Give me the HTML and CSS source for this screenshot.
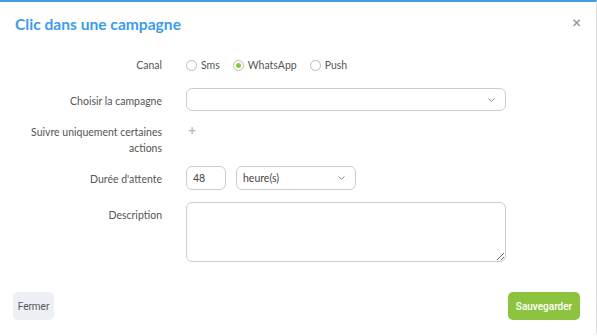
FILE: index.html
```html
<!DOCTYPE html>
<html lang="fr">
<head>
    <meta charset="UTF-8">
    <title>Clic dans une campagne</title>
    <link rel="stylesheet" href="styles.css">
</head>
<body>
    <div class="modal">
        <div class="modal-header">
            <h3>Clic dans une campagne</h3>
            <span class="close">&times;</span>
        </div>
        <form class="modal-body">
            <div class="form-row row-canal">
                <label class="form-label">Canal</label>
                <div class="radios">
                    <label class="radio"><input type="radio" name="canal"> Sms</label>
                    <label class="radio"><input type="radio" name="canal" checked> WhatsApp</label>
                    <label class="radio"><input type="radio" name="canal"> Push</label>
                </div>
            </div>
            <div class="form-row row-campagne">
                <label class="form-label">Choisir la campagne</label>
                <div class="select wide">
                    <span></span>
                    <svg width="7" height="4" viewBox="0 0 7 4"><polyline points="0.5,0.5 3.5,3.2 6.5,0.5" fill="none" stroke="#888" stroke-width="1"/></svg>
                </div>
            </div>
            <div class="form-row row-actions">
                <label class="form-label">Suivre uniquement certaines actions</label>
                <div class="add">+</div>
            </div>
            <div class="form-row row-duree">
                <label class="form-label">Durée d'attente</label>
                <div class="inline">
                    <input class="input small" type="text" value="48">
                    <div class="select unit">
                        <span>heure(s)</span>
                        <svg width="7" height="4" viewBox="0 0 7 4"><polyline points="0.5,0.5 3.5,3.2 6.5,0.5" fill="none" stroke="#888" stroke-width="1"/></svg>
                    </div>
                </div>
            </div>
            <div class="form-row row-desc">
                <label class="form-label">Description</label>
                <textarea class="textarea"></textarea>
            </div>
        </form>
        <div class="modal-footer">
            <button class="btn btn-light">Fermer</button>
            <button class="btn btn-green">Sauvegarder</button>
        </div>
    </div>
</body>
</html>
```

FILE: styles.css
```css
body {
    margin: 0;
    padding: 0;
    font-family: Lato, "Open Sans", sans-serif;
    background: #fff;
}
.modal {
    width: 597px;
    height: 335px;
    border-top: 2px solid #3e9be8;
    border-right: 1px solid #dcdcdc;
    border-bottom-right-radius: 4px;
    box-sizing: border-box;
    display: flex;
    flex-direction: column;
}
.modal-header {
    display: flex;
    justify-content: space-between;
    align-items: center;
    padding: 12px 15px 0 15px;
    height: 20px;
}
.modal-header h3 {
    margin: 0;
    font-size: 15.6px;
    font-weight: 700;
    color: #3d9be9;
    line-height: 20px;
}
.close {
    color: #999;
    font-weight: 700;
    font-size: 15px;
    margin-top: -4px;
}
.modal-body {
    padding-top: 18px;
    flex: 1;
}
.form-row {
    display: grid;
    grid-template-columns: 162px 320px;
    column-gap: 24px;
    align-items: start;
}
.form-label {
    text-align: right;
    font-size: 10.5px;
    line-height: 16px;
    padding: 5px 0 0 30px;
    color: #555;
}
.row-campagne { margin-top: 15px; }
.row-actions { margin-top: 8px; }
.row-duree { margin-top: 10px; }
.row-desc { margin-top: 12px; }
.radios {
    display: flex;
    gap: 13px;
    padding-top: 5px;
    line-height: 16px;
    font-size: 10.5px;
    color: #555;
}
.radio {
    display: flex;
    align-items: center;
    gap: 4px;
}
.radio input {
    appearance: none;
    margin: 0;
    width: 11px;
    height: 11px;
    border: 1px solid #bbb;
    border-radius: 50%;
    box-sizing: border-box;
    position: relative;
}
.radio input:checked::after {
    content: "";
    position: absolute;
    left: 2px;
    top: 2px;
    width: 5px;
    height: 5px;
    border-radius: 50%;
    background: #8cc63f;
}
.select, .input, .textarea {
    border: 1px solid #ccc;
    border-radius: 6px;
    box-sizing: border-box;
    font-family: Lato, sans-serif;
    font-size: 10.5px;
    color: #444;
    background: #fff;
}
.select {
    display: flex;
    justify-content: space-between;
    align-items: center;
    padding: 0 10px 0 6px;
}
.select.wide {
    width: 320px;
    height: 23px;
}
.select.unit {
    width: 120px;
    height: 24px;
}
.inline {
    display: flex;
    gap: 10px;
}
.input.small {
    width: 40px;
    height: 24px;
    padding: 0 6px;
    outline: none;
}
.add {
    padding-top: 3px;
    padding-left: 2px;
    font-size: 14px;
    line-height: 16px;
    color: #bbb;
    font-weight: 700;
}
.textarea {
    width: 320px;
    height: 60px;
    display: block;
    margin: 0;
}
.modal-footer {
    display: flex;
    justify-content: space-between;
    padding: 0 16px 15px 13px;
}
.btn {
    border: none;
    border-radius: 5px;
    height: 28px;
    font-family: Roboto, sans-serif;
    font-size: 10px;
    padding: 0;
    text-align: center;
}
.btn-light {
    width: 41px;
    background: #edf0f4;
    color: #555;
}
.btn-green {
    width: 72px;
    background: #8cc43f;
    color: #fff;
    font-weight: 500;
}
```
